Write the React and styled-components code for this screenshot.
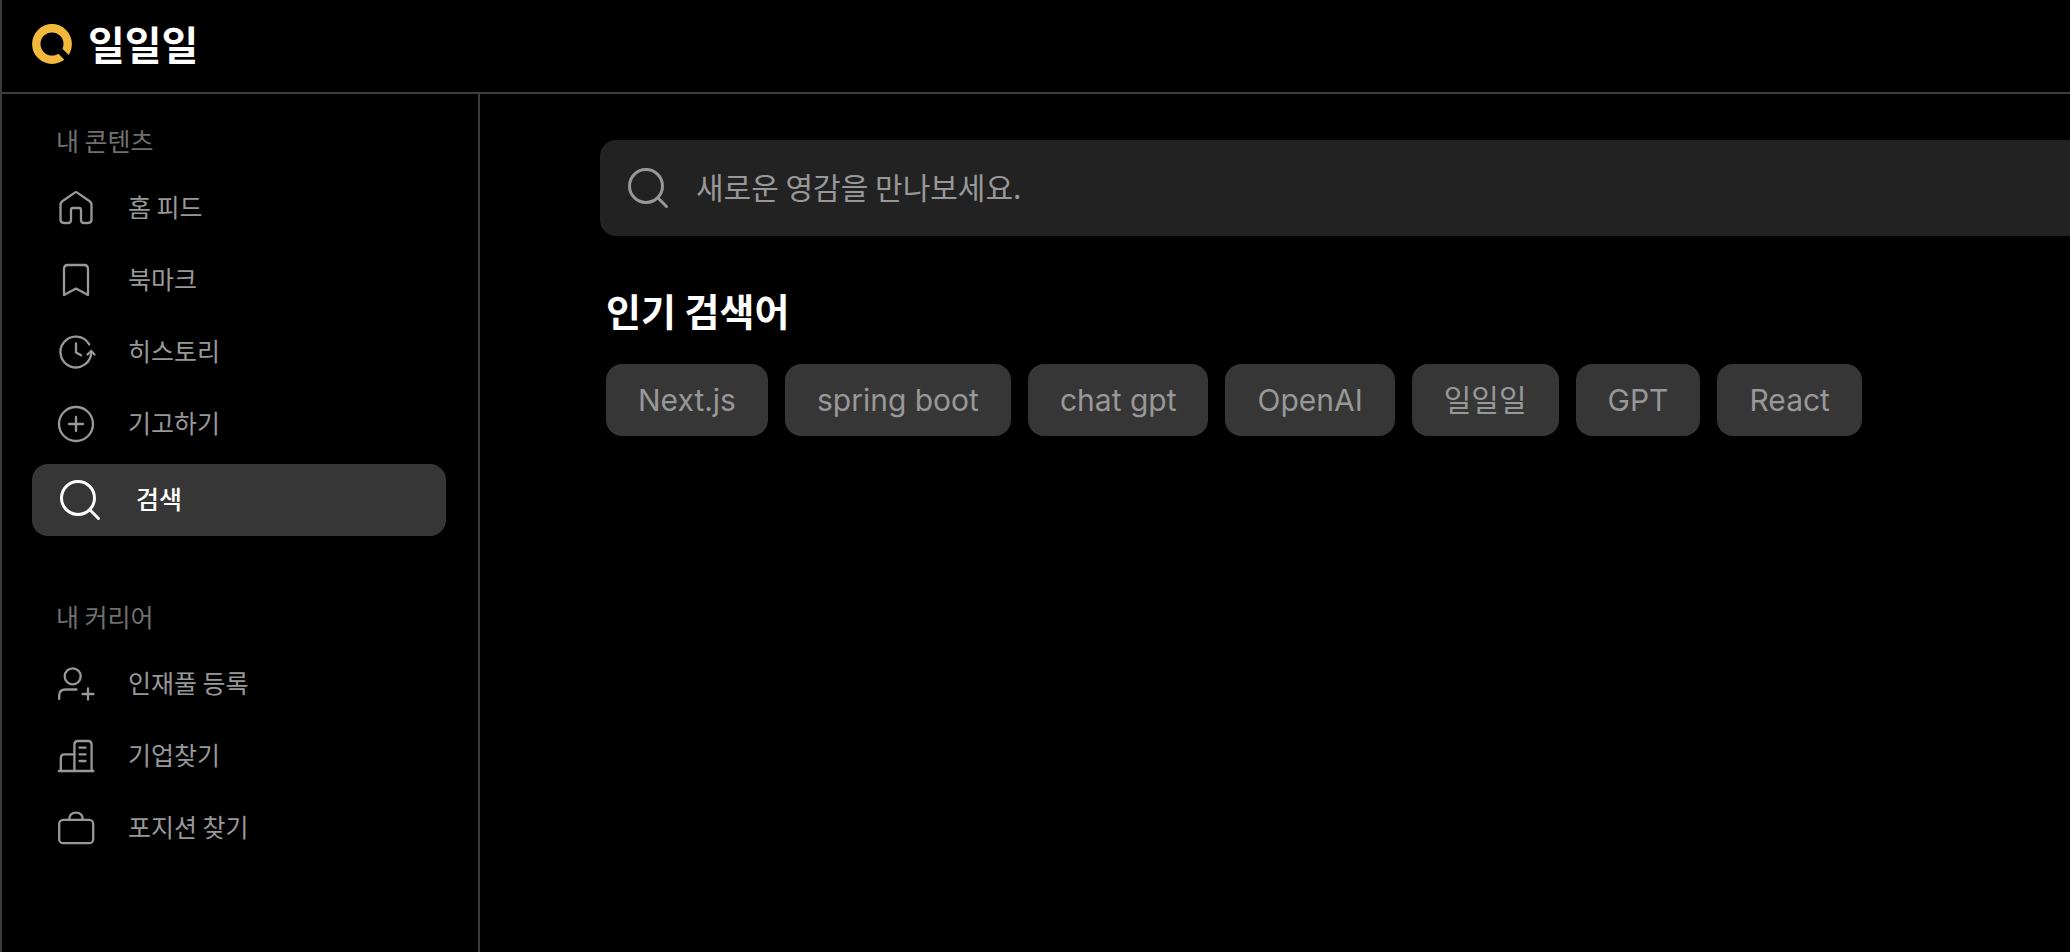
import React from "react";
import styled, { createGlobalStyle, css } from "styled-components";

const color = {
  background: "#000000",
  line: "#3c3c3c",
  surface: "#363636",
  field: "#222222",
  label: "#707070",
  text: "#989898",
  strong: "#ffffff",
  brand: "#f2b93c",
};

const GlobalStyle = createGlobalStyle`
  *, *::before, *::after { box-sizing: border-box; }
  body {
    margin: 0;
    background: ${color.background};
    color: ${color.text};
    font-family: "Noto Sans CJK KR", sans-serif;
  }
`;

const Shell = styled.div`
  display: flex;
  flex-direction: column;
  min-height: 100vh;
  border-left: 2px solid ${color.line};
  overflow-x: hidden;
`;

const Header = styled.header`
  display: flex;
  align-items: center;
  height: 94px;
  padding: 0 30px 4px;
  border-bottom: 2px solid ${color.line};
`;

const Brand = styled.a`
  display: flex;
  align-items: center;
  gap: 16px;
  color: ${color.strong};
  font-size: 40px;
  font-weight: 700;
  line-height: 48px;
  text-decoration: none;
`;

const BrandName = styled.span`
  padding-bottom: 2px;
`;

const BrandMark = styled.svg`
  width: 40px;
  height: 40px;
`;

const Body = styled.div`
  display: flex;
  flex: 1;
`;

const Sidebar = styled.nav`
  flex: none;
  width: 478px;
  padding: 16px 32px 32px 30px;
  border-right: 2px solid ${color.line};
`;

const NavGroup = styled.section`
  & + & {
    margin-top: 50px;
  }
`;

const NavLabel = styled.h2`
  margin: 0;
  padding: 0 0 2px 24px;
  color: ${color.label};
  font-size: 25px;
  font-weight: 400;
  line-height: 60px;
`;

const NavList = styled.ul`
  margin: 0;
  padding: 0;
  list-style: none;
`;

const NavLink = styled.a`
  display: flex;
  align-items: center;
  gap: 32px;
  height: 72px;
  padding: 0 24px;
  border-radius: 16px;
  color: ${color.text};
  font-size: 25px;
  line-height: 36px;
  text-decoration: none;

  ${({ $active }) =>
    $active &&
    css`
      gap: 36px;
      margin: 4px 0;
      padding: 0 28px;
      background: ${color.surface};
      color: ${color.strong};
      font-weight: 500;
    `}
`;

const NavText = styled.span`
  padding-bottom: 4px;
`;

const Icon = styled.svg`
  flex: none;
  width: 40px;
  height: 40px;
  overflow: visible;
  fill: none;
  stroke: currentColor;
  stroke-width: ${({ $weight }) => $weight};
  stroke-linecap: round;
  stroke-linejoin: round;
`;

const Main = styled.main`
  flex: 1;
  min-width: 0;
  padding: 46px 0 46px 120px;
`;

const SearchForm = styled.form`
  display: flex;
  align-items: center;
  gap: 28px;
  height: 96px;
  padding: 0 28px;
  border-radius: 16px 0 0 16px;
  background: ${color.field};
`;

const SearchInput = styled.input`
  flex: 1;
  min-width: 0;
  height: 52px;
  padding: 0 0 4px;
  border: 0;
  outline: 0;
  background: transparent;
  color: ${color.strong};
  font: inherit;
  font-size: 30px;

  &::placeholder {
    color: ${color.text};
    opacity: 1;
  }
`;

const Popular = styled.section`
  padding: 50px 6px 0;
`;

const PopularTitle = styled.h1`
  margin: 0 0 30px;
  color: ${color.strong};
  font-size: 38px;
  font-weight: 700;
  line-height: 48px;
`;

const ChipRow = styled.div`
  display: flex;
  flex-wrap: wrap;
  gap: 17px;
`;

const Chip = styled.button`
  height: 72px;
  padding: 0 32px;
  border: 0;
  border-radius: 16px;
  background: ${color.surface};
  color: ${color.text};
  font-family: Inter, "Noto Sans CJK KR", sans-serif;
  font-size: 30px;
  line-height: 40px;
  cursor: pointer;
`;

const drawings = {
  home: (
    <path d="M18.8 4.6 6 13.5Q4.5 14.6 4.5 16.5V31.5Q4.5 35 8 35H12Q15 35 15 32V22Q15 20 17 20H23Q25 20 25 22V32Q25 35 28 35H32Q35.5 35 35.5 31.5V16.5Q35.5 14.6 34 13.5L21.2 4.6Q20 3.7 18.8 4.6Z" />
  ),
  bookmark: <path d="M8 35V9Q8 5 12 5H28Q32 5 32 9V35L20 28.5Z" />,
  history: (
    <>
      <path d="M35.2 19.5A15.4 15.4 0 1 1 33.2 12.4" />
      <path d="M31.5 22.5 35.2 19 38.5 22.5" />
      <path d="M20 11.5V20.5L25 23.3" />
    </>
  ),
  write: (
    <>
      <circle cx="20" cy="20" r="17" />
      <path d="M20 13V27M13 20H27" />
    </>
  ),
  search: (
    <>
      <circle cx="18" cy="18" r="16.5" />
      <path d="M30.3 30.3 38.5 38.5" />
    </>
  ),
  talent: (
    <>
      <circle cx="16.7" cy="12.3" r="8" />
      <path d="M3.2 35V31.5Q3.2 25.5 9.5 25.5H20.5" />
      <path d="M32 24.5V35.5M26.5 30H37.5" />
    </>
  ),
  company: (
    <>
      <path d="M2.8 35H37.4" />
      <path d="M18.4 35V8.5Q18.4 5 22 5H32Q35.6 5 35.6 8.5V35" />
      <path d="M4.8 35V22Q4.8 18.4 8.4 18.4H18.4" />
      <path d="M23.5 11.7H29.5M23.5 18.3H29.5M23.5 25H29.5" />
    </>
  ),
  position: (
    <>
      <rect x="3.2" y="11.8" width="34" height="23.4" rx="4" />
      <path d="M13.2 11.5Q13.5 4.6 20 4.6T26.8 11.5" />
    </>
  ),
};

const navigation = [
  {
    title: "내 콘텐츠",
    items: [
      { icon: "home", text: "홈 피드" },
      { icon: "bookmark", text: "북마크" },
      { icon: "history", text: "히스토리" },
      { icon: "write", text: "기고하기" },
      { icon: "search", text: "검색", active: true },
    ],
  },
  {
    title: "내 커리어",
    items: [
      { icon: "talent", text: "인재풀 등록" },
      { icon: "company", text: "기업찾기" },
      { icon: "position", text: "포지션 찾기" },
    ],
  },
];

const keywords = ["Next.js", "spring boot", "chat gpt", "OpenAI", "일일일", "GPT", "React"];

function LineIcon({ name, weight }) {
  return (
    <Icon viewBox="0 0 40 40" $weight={weight} aria-hidden="true">
      {drawings[name]}
    </Icon>
  );
}

export default function App() {
  return (
    <>
      <GlobalStyle />
      <Shell>
        <Header>
          <Brand href="#home">
            <BrandMark viewBox="0 0 40 40" aria-hidden="true">
              <circle cx="20" cy="20" r="15.7" fill="none" stroke={color.brand} strokeWidth="8.4" />
              <path d="M25 24 39 37.6" stroke={color.background} strokeWidth="6.4" />
            </BrandMark>
            <BrandName>일일일</BrandName>
          </Brand>
        </Header>
        <Body>
          <Sidebar>
            {navigation.map((group) => (
              <NavGroup key={group.title}>
                <NavLabel>{group.title}</NavLabel>
                <NavList>
                  {group.items.map((item) => (
                    <li key={item.text}>
                      <NavLink
                        href={`#${item.icon}`}
                        $active={item.active}
                        aria-current={item.active ? "page" : undefined}
                      >
                        <LineIcon name={item.icon} weight={item.active ? 3 : 2.3} />
                        <NavText>{item.text}</NavText>
                      </NavLink>
                    </li>
                  ))}
                </NavList>
              </NavGroup>
            ))}
          </Sidebar>
          <Main>
            <SearchForm role="search" onSubmit={(event) => event.preventDefault()}>
              <LineIcon name="search" weight={3} />
              <SearchInput
                type="search"
                aria-label="검색"
                placeholder="새로운 영감을 만나보세요."
              />
            </SearchForm>
            <Popular>
              <PopularTitle>인기 검색어</PopularTitle>
              <ChipRow>
                {keywords.map((keyword) => (
                  <Chip key={keyword} type="button">
                    {keyword}
                  </Chip>
                ))}
              </ChipRow>
            </Popular>
          </Main>
        </Body>
      </Shell>
    </>
  );
}
